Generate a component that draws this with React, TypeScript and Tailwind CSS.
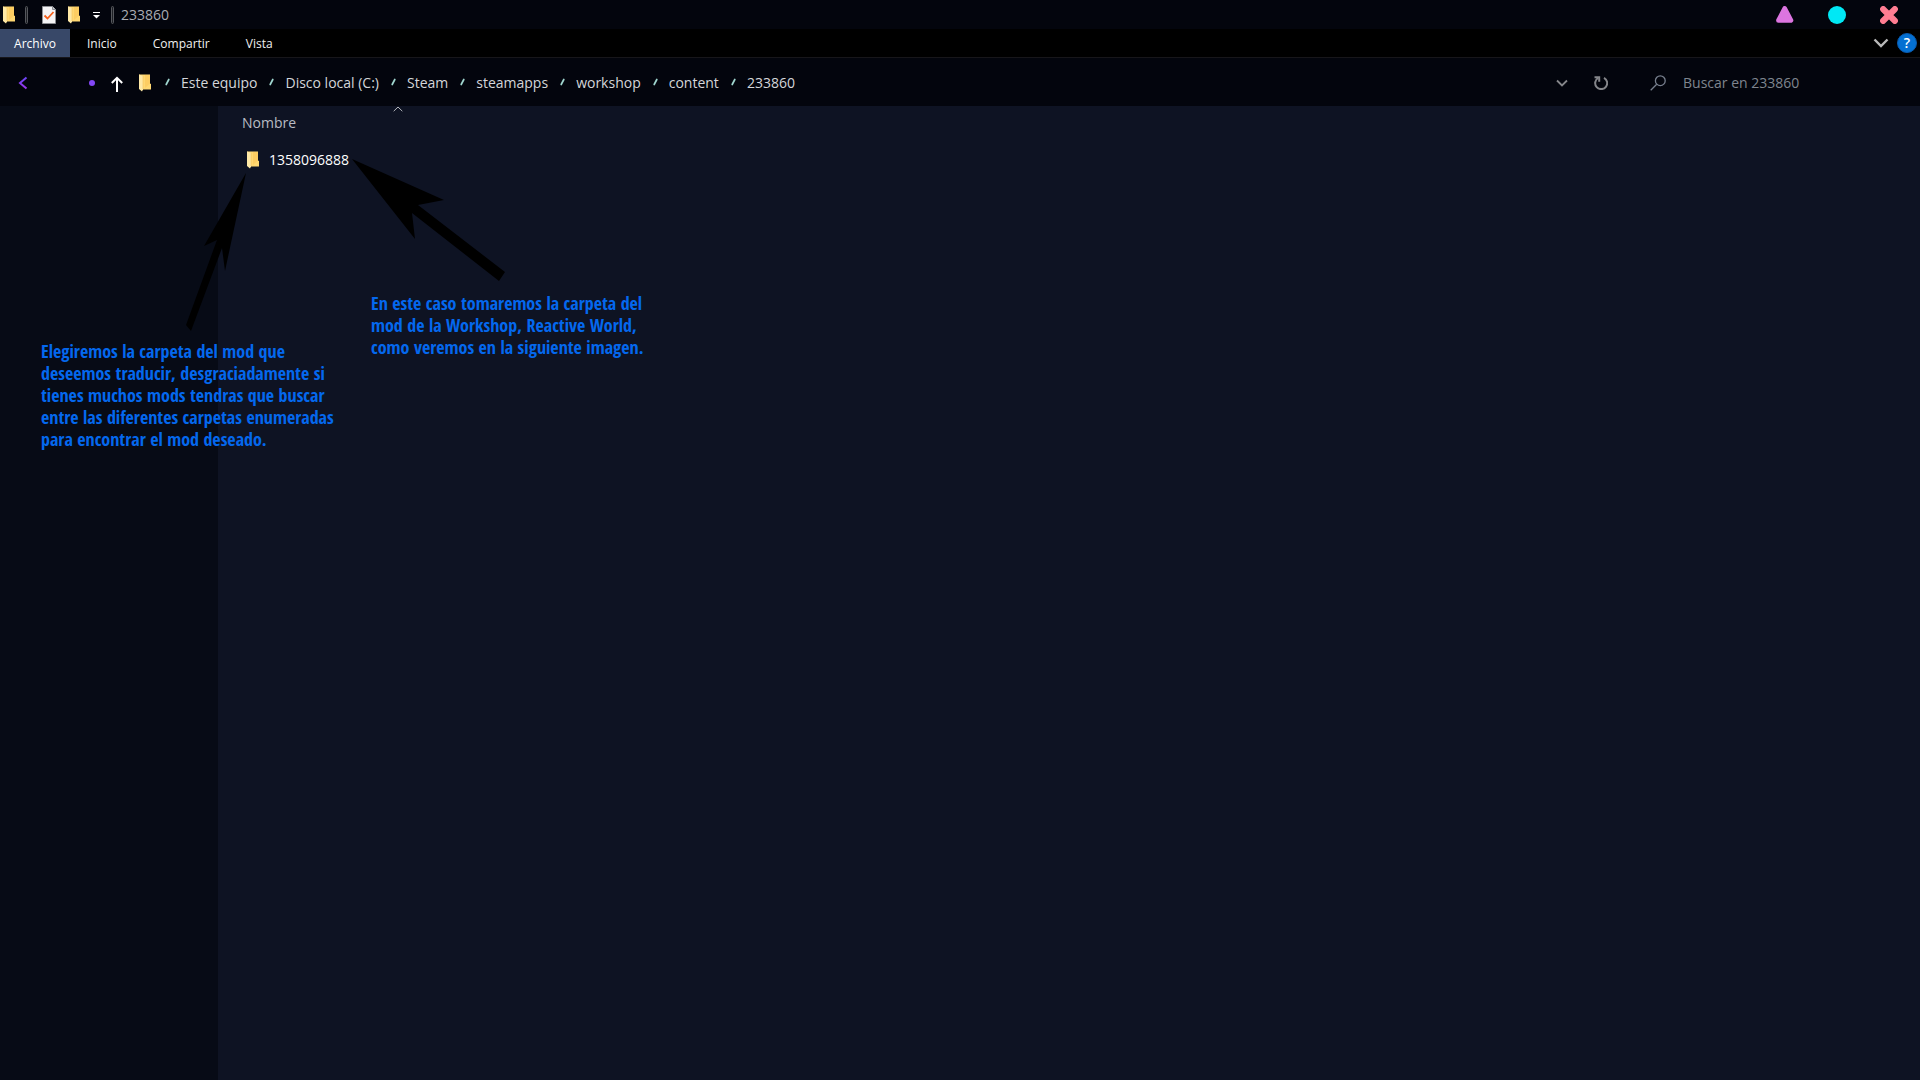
interface IconProps {
  className?: string;
}

const tabs = ['Inicio', 'Compartir', 'Vista'];

const crumbs = ['Este equipo', 'Disco local (C:)', 'Steam', 'steamapps', 'workshop', 'content', '233860'];

const files = ['1358096888'];

function FolderIcon({ className = '' }: IconProps) {
  return (
    <svg viewBox="0 0 12 18" className={`h-[18px] w-3 shrink-0 ${className}`} aria-hidden="true">
      <path d="M0 0.5H11V9.5L12 10V15.5H3L0 14Z" fill="#ffd872" />
      <path d="M6 1H11V9.5L6 14Z" fill="#fdcd62" />
      <path d="M0 0.5L4 2V15.5L3 17.5L0 15Z" fill="#ffe9a6" />
      <path d="M4 2V15" stroke="#f3c35c" strokeWidth="0.6" />
    </svg>
  );
}

function CheckSheetIcon() {
  return (
    <svg viewBox="0 0 14 18" className="h-[18px] w-3.5 shrink-0" aria-hidden="true">
      <path d="M0.5 0.5H10.5L13.5 3.5V17.5H0.5Z" fill="#f4f4f6" stroke="#8d8f94" />
      <path d="M10.5 0.5V3.5H13.5" fill="#c9cbd0" stroke="#8d8f94" />
      <path d="M2.5 9.5L5.5 12.5L11.5 6" fill="none" stroke="#f4601c" strokeWidth="1.8" />
    </svg>
  );
}

function Divider() {
  return <span className="h-[18px] w-[3px] rounded-sm border border-[#55575c] bg-[#1d1f24]" />;
}

function Slash() {
  return (
    <svg viewBox="0 0 5 8" className="mb-[3px] h-2 w-[5px] shrink-0" aria-hidden="true">
      <path d="M3.8 1.5L1.2 6.5" stroke="#9fd6cf" strokeWidth="1.7" strokeLinecap="round" />
    </svg>
  );
}

function TitleBar() {
  return (
    <header className="flex h-[29px] items-center justify-between bg-[#03050d] pl-[3px] pr-[22px]">
      <div className="flex items-center">
        <FolderIcon />
        <div className="ml-2.5 flex items-center">
          <Divider />
          <button type="button" aria-label="Propiedades" className="ml-3.5">
            <CheckSheetIcon />
          </button>
          <button type="button" aria-label="Nueva carpeta" className="ml-3">
            <FolderIcon />
          </button>
          <button type="button" aria-label="Personalizar barra" className="ml-3 mt-0.5">
            <svg viewBox="0 0 9 7" className="h-[7px] w-[9px]" aria-hidden="true">
              <path d="M1 0.5H8" stroke="#fff" />
              <path d="M1 3H8L4.5 6.5Z" fill="#fff" />
            </svg>
          </button>
          <span className="ml-2.5 flex">
            <Divider />
          </span>
        </div>
        <h1 className="ml-[7px] text-sm text-[#a9acb3]">233860</h1>
      </div>

      <div className="flex items-center gap-[34px]">
        <button type="button" aria-label="Minimizar">
          <svg viewBox="0 0 18 18" className="size-[18px]">
            <path d="M8.7 2.4L15 14.4H2.4Z" fill="#dc75e0" stroke="#dc75e0" strokeWidth="4.6" strokeLinejoin="round" />
          </svg>
        </button>
        <button type="button" aria-label="Maximizar">
          <svg viewBox="0 0 18 18" className="size-[18px]">
            <circle cx="9" cy="9" r="9" fill="#00e8f5" />
          </svg>
        </button>
        <button type="button" aria-label="Cerrar">
          <svg viewBox="0 0 18 18" className="size-[18px]">
            <path d="M3.2 3.2L14.8 14.8M14.8 3.2L3.2 14.8" stroke="#ff7d92" strokeWidth="6.2" strokeLinecap="round" />
          </svg>
        </button>
      </div>
    </header>
  );
}

function Ribbon() {
  return (
    <div className="flex h-[29px] items-stretch justify-between border-b border-[#17161a] bg-black pr-[3px] text-xs text-[#f0f0f0]">
      <div className="flex">
        <button type="button" className="w-[70px] bg-[#384868] pt-0.5 text-white">
          Archivo
        </button>
        <div className="flex gap-9 pl-[17px]">
          {tabs.map((tab) => (
            <button key={tab} type="button" className="pt-0.5">
              {tab}
            </button>
          ))}
        </div>
      </div>
      <div className="flex items-center gap-2">
        <button type="button" aria-label="Expandir cinta">
          <svg viewBox="0 0 16 10" className="h-2.5 w-4" fill="none">
            <path d="M1.5 1.5L8 8L14.5 1.5" stroke="#b9b9b9" strokeWidth="2.4" />
          </svg>
        </button>
        <button
          type="button"
          aria-label="Ayuda"
          className="size-5 rounded-full border border-[#0a5aae] bg-[#0470d2] text-sm leading-4 font-semibold text-white"
        >
          ?
        </button>
      </div>
    </div>
  );
}

function AddressBar() {
  return (
    <div className="flex h-12 items-center justify-between bg-[#03050d] pt-0.5 pl-[18px] text-[#d4d6da]">
      <div className="flex items-center">
        <button type="button" aria-label="Atrás">
          <svg viewBox="0 0 10 14" className="h-3.5 w-2.5" fill="none">
            <defs>
              <linearGradient id="back" x1="0" y1="0" x2="0" y2="1">
                <stop offset="0" stopColor="#6a45f5" />
                <stop offset="1" stopColor="#9a35ea" />
              </linearGradient>
            </defs>
            <path d="M8.5 1.5L2 7L8.5 12.5" stroke="url(#back)" strokeWidth="2" />
          </svg>
        </button>
        <button type="button" aria-label="Ubicaciones recientes" className="ml-[61px] size-1.5 rounded-full bg-[#8347f5]" />
        <button type="button" aria-label="Subir" className="ml-4 mt-0.5">
          <svg viewBox="0 0 12 16" className="h-4 w-3" fill="none">
            <path d="M6 16V1.8M0.8 7L6 1.8L11.2 7" stroke="#fff" strokeWidth="2" />
          </svg>
        </button>
        <FolderIcon className="ml-4" />
        <nav aria-label="Ruta" className="ml-3.5">
          <ol className="flex items-center gap-3 text-sm">
            {crumbs.map((crumb) => (
              <li key={crumb} className="flex items-center gap-[11px]">
                <Slash />
                <a href="#">{crumb}</a>
              </li>
            ))}
          </ol>
        </nav>
      </div>

      <div className="flex items-center">
        <button type="button" aria-label="Ubicaciones anteriores">
          <svg viewBox="0 0 12 8" className="h-2 w-3" fill="none">
            <path d="M1 1.5L6 6.5L11 1.5" stroke="#85868a" strokeWidth="1.8" />
          </svg>
        </button>
        <button type="button" aria-label="Actualizar" className="ml-[26px]">
          <svg viewBox="0 0 14 14" className="size-3.5" fill="none" stroke="#85868a" strokeWidth="2">
            <path d="M10 1.8A6 6 0 1 1 4 2" />
            <path d="M0.5 1.2H5.2V5.8" />
          </svg>
        </button>
        <label htmlFor="search" className="ml-[42px]" aria-label="Buscar">
          <svg viewBox="0 0 16 16" className="size-4" fill="none" stroke="#777f8d" strokeWidth="1.3">
            <circle cx="10.3" cy="5.7" r="4.9" />
            <path d="M6.7 9.3L0.7 15.3" />
          </svg>
        </label>
        <input
          id="search"
          type="text"
          placeholder="Buscar en 233860"
          className="ml-[17px] w-[237px] bg-transparent text-sm outline-none placeholder:text-[#7f858f]"
        />
      </div>
    </div>
  );
}

function FileList() {
  return (
    <main className="relative flex-1 bg-[#0e1323] pl-6">
      <table className="w-[180px] text-left text-sm">
        <thead>
          <tr>
            <th scope="col" className="h-[34px] font-normal text-[#b9bcc4]">
              Nombre
            </th>
          </tr>
        </thead>
        <tbody>
          {files.map((file) => (
            <tr key={file}>
              <td className="pt-2.5 pl-[5px] text-white">
                <span className="flex items-center gap-2.5">
                  <FolderIcon />
                  {file}
                </span>
              </td>
            </tr>
          ))}
        </tbody>
      </table>
      <svg viewBox="0 0 10 6" className="absolute top-0 left-[175px] h-1.5 w-2.5" fill="none" aria-hidden="true">
        <path d="M0.7 5.2L5 1L9.3 5.2" stroke="#b4b7bd" />
      </svg>
    </main>
  );
}

// Notes and arrows drawn over the window
function Annotations() {
  return (
    <>
      <svg
        viewBox="180 150 340 190"
        className="pointer-events-none absolute top-[150px] left-[180px] h-[190px] w-[340px]"
        aria-hidden="true"
      >
        <path d="M246 173L204 246L217 240L186 325L191 331L222 248L225 271Z" fill="#000" />
        <path d="M352 159L444 200L418 205L505 272L499 281L412 213L415 239Z" fill="#000" />
      </svg>
      <p className="absolute top-[340px] left-[41px] font-['Open_Sans_Condensed','Liberation_Sans_Narrow','Open_Sans',sans-serif] text-[18px] leading-[22px] font-bold whitespace-nowrap text-[#0468ee]">
        Elegiremos la carpeta del mod que
        <br />
        deseemos traducir, desgraciadamente si
        <br />
        tienes muchos mods tendras que buscar
        <br />
        entre las diferentes carpetas enumeradas
        <br />
        para encontrar el mod deseado.
      </p>
      <p className="absolute top-[292px] left-[371px] font-['Open_Sans_Condensed','Liberation_Sans_Narrow','Open_Sans',sans-serif] text-[18px] leading-[22px] font-bold whitespace-nowrap text-[#0468ee]">
        En este caso tomaremos la carpeta del
        <br />
        mod de la Workshop, Reactive World,
        <br />
        como veremos en la siguiente imagen.
      </p>
    </>
  );
}

export default function App() {
  return (
    <div className="relative flex min-h-screen flex-col bg-[#03050d] font-['Open_Sans','Noto_Sans',sans-serif]">
      <TitleBar />
      <Ribbon />
      <AddressBar />
      <div className="flex flex-1">
        <aside className="w-[218px] bg-[#070b16]" />
        <FileList />
      </div>
      <Annotations />
    </div>
  );
}
